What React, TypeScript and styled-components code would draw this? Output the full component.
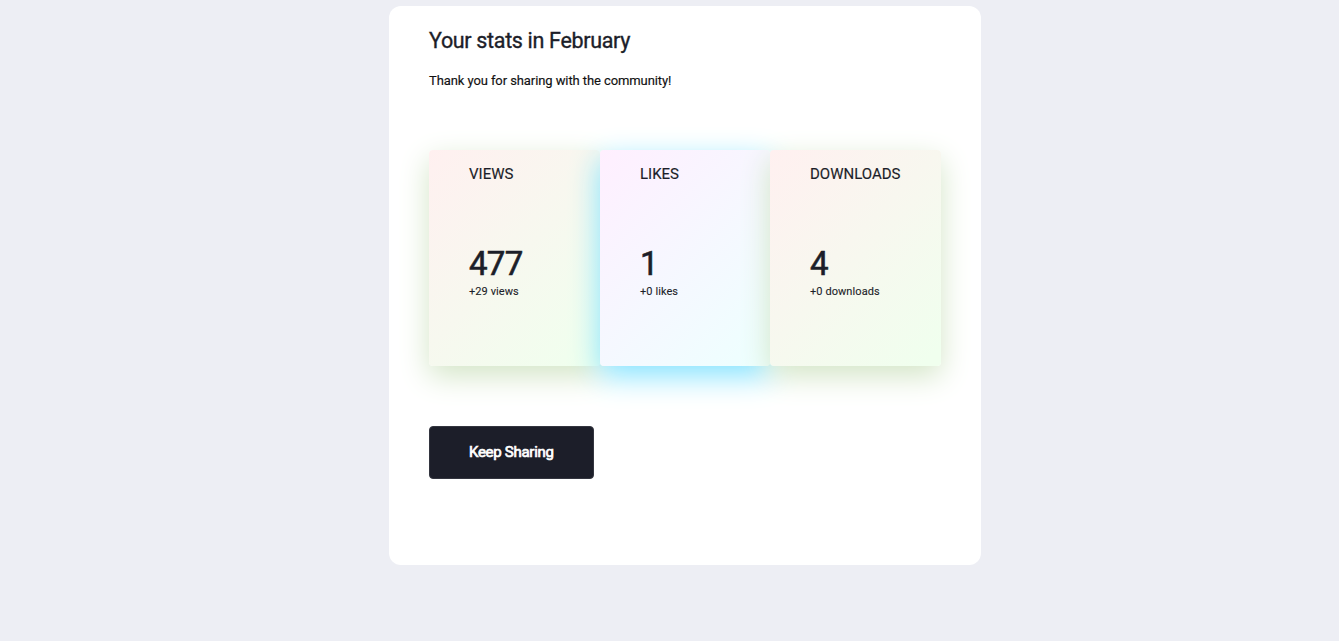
import React from 'react';
import styled, { createGlobalStyle } from 'styled-components';

const GlobalStyle = createGlobalStyle`
  body {
    margin: 0;
    background: #edeef4;
    font-family: Roboto, 'Liberation Sans', sans-serif;
    color: #1c1e29;
  }
`;

const Page = styled.div`
  box-sizing: border-box;
  min-height: 641px;
  padding: 6px 0 0 389px;
`;

const Panel = styled.main`
  box-sizing: border-box;
  width: 592px;
  height: 559px;
  padding: 20px 40px;
  border-radius: 12px;
  background: #fff;
`;

const Title = styled.h1`
  margin: 0;
  font-size: 21.5px;
  line-height: 30px;
  font-weight: 400;
  letter-spacing: -0.33px;
  -webkit-text-stroke: 0.35px;
`;

const Intro = styled.p`
  margin: 14px 0 59px;
  font-size: 13px;
  line-height: 21px;
  letter-spacing: -0.09px;
  color: #111;
  -webkit-text-stroke: 0.15px;
`;

const Stats = styled.section`
  display: grid;
  grid-template-columns: 171px 170px 171px;
`;

const Card = styled.article<{ $cool?: boolean }>`
  box-sizing: border-box;
  position: relative;
  height: 216px;
  padding: 14px 0 0 40px;
  border-radius: 4px;
  background: ${({ $cool }) =>
    $cool
      ? 'linear-gradient(135deg, #ffefff 0%, #eeffff 95%)'
      : 'linear-gradient(135deg, #fff0f0 0%, #f0ffee 95%)'};
  box-shadow: 0 10px 30px ${({ $cool }) => ($cool ? '#84e3ff' : '#d3e5c6')};
`;

const Label = styled.h2`
  margin: 0;
  font-size: 15px;
  line-height: 20px;
  font-weight: 400;
  -webkit-text-stroke: 0.15px;
`;

const Value = styled.div`
  margin-top: 60px;
  font-size: 33px;
  line-height: 40px;
  font-weight: 400;
  letter-spacing: -0.7px;
  -webkit-text-stroke: 0.6px;
`;

const Change = styled.div`
  font-size: 11px;
  line-height: 16px;
  letter-spacing: 0.08px;
  -webkit-text-stroke: 0.1px;
`;

const ShareButton = styled.button`
  display: block;
  width: 165px;
  height: 53px;
  margin-top: 60px;
  padding: 0 0 1px 39px;
  border: 1px solid #33353f;
  border-radius: 4px;
  background: #1c1e29;
  color: #fff;
  font: 400 15px Roboto, 'Liberation Sans', sans-serif;
  letter-spacing: -0.28px;
  -webkit-text-stroke: 0.7px;
  text-align: left;
`;

const stats = [
  { label: 'VIEWS', value: 477, change: '+29 views' },
  { label: 'LIKES', value: 1, change: '+0 likes', cool: true },
  { label: 'DOWNLOADS', value: 4, change: '+0 downloads' },
];

export default function App() {
  return (
    <Page>
      <GlobalStyle />
      <Panel>
        <Title>Your stats in February</Title>
        <Intro>Thank you for sharing with the community!</Intro>
        <Stats>
          {stats.map((s) => (
            <Card key={s.label} $cool={s.cool}>
              <Label>{s.label}</Label>
              <Value>{s.value}</Value>
              <Change>{s.change}</Change>
            </Card>
          ))}
        </Stats>
        <ShareButton>Keep Sharing</ShareButton>
      </Panel>
    </Page>
  );
}
